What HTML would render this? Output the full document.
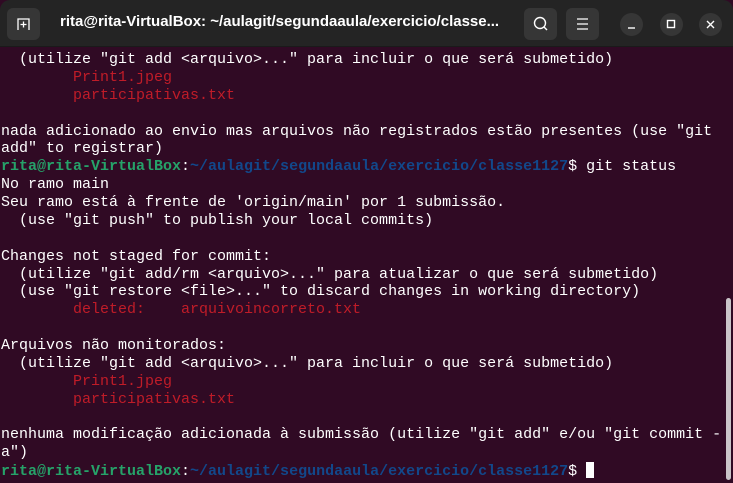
<!DOCTYPE html>
<html><head><meta charset="utf-8"><style>
*{margin:0;padding:0;box-sizing:border-box}
body{width:733px;height:483px;overflow:hidden;background:#300a24;font-family:"Liberation Sans",sans-serif;position:relative}
.tb{position:absolute;left:0;top:0;width:733px;height:47px;background:#242424;border-radius:10px 10px 0 0;border-bottom:1px solid #1a1a1a}
.btn{position:absolute;top:8px;width:33px;height:32px;background:#363636;border-radius:6px}
.circ{position:absolute;top:13px;width:23px;height:23px;border-radius:50%;background:#363636}
.title{position:absolute;left:60px;top:13px;color:#fff;font-weight:bold;font-size:15px;white-space:nowrap}
.term{position:absolute;left:1px;top:51px;font-family:"Liberation Mono","DejaVu Sans Mono",monospace;font-size:15px;line-height:17.87px;color:#ffffff;white-space:pre}
.r{color:#c01c28}.g{color:#26a269;font-weight:bold}.b{color:#12488b;font-weight:bold}
.cur{display:inline-block;width:8px;height:16px;background:#fff;vertical-align:-3px}
.sb{position:absolute;left:726px;top:298px;width:5px;height:182px;background:#c9c4c8;border-radius:3px}
</style></head><body>
<div class="tb">
<div class="btn" style="left:7px"><svg width="33" height="32"><path d="M11 22V11h11v11" stroke="#fff" stroke-width="1.3" fill="none"/><path d="M16.5 13.5v6M13.5 16.5h6" stroke="#fff" stroke-width="1.3"/></svg></div>
<div class="title">rita@rita-VirtualBox: ~/aulagit/segundaaula/exercicio/classe...</div>
<div class="btn" style="left:524px"><svg width="33" height="32"><circle cx="16" cy="15" r="5.5" stroke="#fff" stroke-width="1.4" fill="none"/><path d="M20 19l3 3" stroke="#fff" stroke-width="1.4"/></svg></div>
<div class="btn" style="left:566px"><svg width="33" height="32"><path d="M11 11h11M11 16h11M11 21h11" stroke="#fff" stroke-width="1.3"/></svg></div>
<div class="circ" style="left:620px"><svg width="23" height="23"><path d="M8 15h7" stroke="#fff" stroke-width="1.4"/></svg></div>
<div class="circ" style="left:660px"><svg width="23" height="23"><rect x="7.5" y="7.5" width="7" height="7" stroke="#fff" stroke-width="1.4" fill="none"/></svg></div>
<div class="circ" style="left:699px"><svg width="23" height="23"><path d="M8 8l7 7M15 8l-7 7" stroke="#fff" stroke-width="1.4"/></svg></div>
</div>
<div class="term">  (utilize "git add &lt;arquivo&gt;..." para incluir o que será submetido)
<span class="r">        Print1.jpeg</span>
<span class="r">        participativas.txt</span>

nada adicionado ao envio mas arquivos não registrados estão presentes (use "git
add" to registrar)
<span class="g">rita@rita-VirtualBox</span>:<span class="b">~/aulagit/segundaaula/exercicio/classe1127</span>$ git status
No ramo main
Seu ramo está à frente de 'origin/main' por 1 submissão.
  (use "git push" to publish your local commits)

Changes not staged for commit:
  (utilize "git add/rm &lt;arquivo&gt;..." para atualizar o que será submetido)
  (use "git restore &lt;file&gt;..." to discard changes in working directory)
<span class="r">        deleted:    arquivoincorreto.txt</span>

Arquivos não monitorados:
  (utilize "git add &lt;arquivo&gt;..." para incluir o que será submetido)
<span class="r">        Print1.jpeg</span>
<span class="r">        participativas.txt</span>

nenhuma modificação adicionada à submissão (utilize "git add" e/ou "git commit -
a")
<span class="g">rita@rita-VirtualBox</span>:<span class="b">~/aulagit/segundaaula/exercicio/classe1127</span>$ <span class="cur"></span></div>
<div class="sb"></div>
</body></html>
